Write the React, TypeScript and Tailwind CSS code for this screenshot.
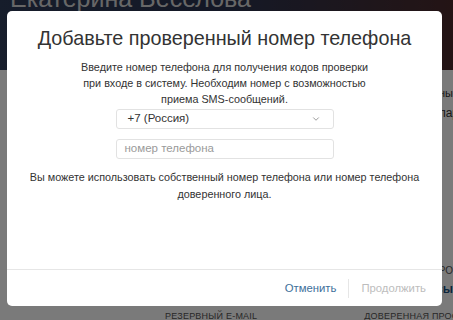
import { ChevronDown } from "lucide-react";

const font = { fontFamily: '"Liberation Sans", Arial, sans-serif' };

function PageBehind() {
    return (
        <div className="flex flex-col w-[453px] h-[320px]">
            <div className="h-[70px] shrink-0 bg-gradient-to-r from-[#2f3d5a] via-[#2a3350] to-[#4b2a2c] overflow-hidden">
                <p className="text-[25px] leading-none text-[#d8d8d8] pl-[10px] -mt-[14px] whitespace-nowrap">Екатерина Веселова</p>
            </div>
            <div className="flex-1 bg-white overflow-hidden">
                <div className="flex flex-col gap-[2px] items-end pt-[15px] text-[11px] text-[#333]">
                    <span className="-mr-[6px]">ные</span>
                    <span className="-mr-[6px] text-[12px]">пар</span>
                </div>
                <div className="flex justify-end pt-[141px] text-[10px] text-[#555]">ПРО</div>
                <div className="flex justify-end pt-[2px] text-[12px] text-[#1a4f80] font-bold">сы</div>
                <div className="flex gap-[107px] pl-[165px] pt-[12px] text-[9px] text-[#555] tracking-wide whitespace-nowrap">
                    <span>РЕЗЕРВНЫЙ E-MAIL</span>
                    <span>ДОВЕРЕННАЯ ПРОСЬБА</span>
                </div>
            </div>
        </div>
    );
}

export default function App() {
    return (
        <div className="relative w-[453px] h-[320px] overflow-hidden" style={font}>
            <PageBehind />
            {/* dimming overlay + modal */}
            <div className="absolute inset-0 bg-black/[0.52] pl-[7px] pt-[11px]">
                <div className="w-[435px] h-[295px] bg-white rounded-[5px] flex flex-col">
                    <div className="flex-1 flex flex-col items-center text-[#333]">
                        <h1 className="text-[19.8px] leading-none mt-[18px]">Добавьте проверенный номер телефона</h1>
                        <p className="text-[10.8px] leading-[16px] text-center mt-[10px]">
                            Введите номер телефона для получения кодов проверки<br />
                            при входе в систему. Необходим номер с возможностью<br />
                            приема SMS-сообщений.
                        </p>
                        <div className="w-[218px] h-[20px] mt-[2px] border border-[#e2e2e2] rounded-[3px] flex items-center justify-between pl-[11px] pr-[12px] text-[11.5px]">
                            <span>+7 (Россия)</span>
                            <ChevronDown className="w-[10px] h-[10px] text-[#888]" strokeWidth={2} />
                        </div>
                        <div className="w-[218px] h-[20px] mt-[10px] border border-[#e2e2e2] rounded-[3px] flex items-center pl-[8px] text-[11.5px] text-[#9a9a9a]">
                            номер телефона
                        </div>
                        <p className="text-[10.8px] leading-[17px] text-center mt-[10px]">
                            Вы можете использовать собственный номер телефона или номер телефона<br />
                            доверенного лица.
                        </p>
                    </div>
                    <div className="h-[37px] border-t border-[#e6e6e6] flex items-center justify-end pr-[16px] text-[11.3px]">
                        <span className="text-[#3e6f9a]">Отменить</span>
                        <span className="w-px h-[19px] bg-[#e6e6e6] mx-[12px]" />
                        <span className="text-[#bdbdbd]">Продолжить</span>
                    </div>
                </div>
            </div>
        </div>
    );
}
